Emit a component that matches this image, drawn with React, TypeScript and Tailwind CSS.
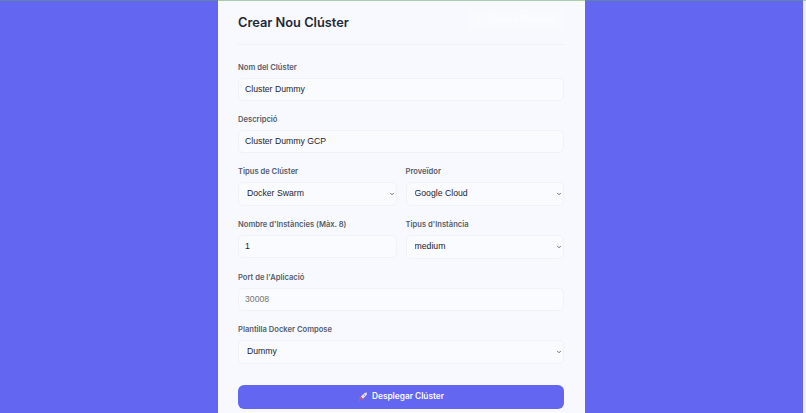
import type { ReactNode } from 'react';
import { ChevronDown } from 'lucide-react';

function Label({ children }: { children: ReactNode }) {
  return <label className="block h-[11px] text-[7.6px] leading-[11px] font-semibold text-[#555d6b]">{children}</label>;
}

function TextField({ label, value, placeholder }: { label: string; value?: string; placeholder?: string }) {
  return (
    <div className="flex flex-col gap-[5px]">
      <Label>{label}</Label>
      <input
        readOnly
        defaultValue={value}
        placeholder={placeholder}
        className="h-[22.5px] w-full rounded-[5px] border border-[#f0f2f7] bg-[#fafbfe] px-[6px] font-['Liberation_Sans',sans-serif] text-[8.7px] text-[#1b2330] outline-none placeholder:text-[#757575]"
      />
    </div>
  );
}

function SelectField({ label, value }: { label: string; value: string }) {
  return (
    <div className="flex flex-col gap-[5px]">
      <Label>{label}</Label>
      <div className="relative">
        <select
          defaultValue={value}
          className="block h-[23.5px] w-full appearance-none rounded-[5px] border border-[#f0f2f7] bg-[#fafbfe] pl-[8px] font-['Liberation_Sans',sans-serif] text-[8.7px] text-[#1b2330] outline-none"
        >
          <option>{value}</option>
        </select>
        <ChevronDown className="absolute top-[9px] right-[2px] h-[6px] w-[6px] text-[#374151]" strokeWidth={3} />
      </div>
    </div>
  );
}

export default function App() {
  return (
    <div className="relative flex h-[413px] w-full overflow-hidden bg-[#6366f1] font-['Inter',sans-serif]">
      {/* top loading line */}
      <div className="absolute inset-x-0 top-0 h-px bg-[#5fa05f]/50" />

      <div className="flex flex-1 justify-center">
        <div className="h-full w-[367px] bg-[#f8f9fe] pt-[14px] pr-[21px] pl-[20px]">
          {/* Header */}
          <div className="flex h-[31px] items-start justify-between border-b border-[#eff1f5]">
            <h1 className="text-[12.8px] leading-[18px] font-semibold text-[#1f2937]">Crear Nou Clúster</h1>
            <a className="-mt-[4px] rounded-[4px] bg-white/10 px-[7px] py-[4px] text-[8.4px] leading-[11px] font-medium text-white/70">← Tornar a Plantilles</a>
          </div>

          {/* Form */}
          <div className="mt-[17px] flex flex-col gap-[13.5px]">
            <TextField label="Nom del Clúster" value="Cluster Dummy" />
            <TextField label="Descripció" value="Cluster Dummy GCP" />
            <div className="grid grid-cols-2 gap-x-[9px]">
              <SelectField label="Tipus de Clúster" value="Docker Swarm" />
              <SelectField label="Proveïdor" value="Google Cloud" />
            </div>
            <div className="grid grid-cols-2 gap-x-[9px]">
              <TextField label="Nombre d'Instàncies (Màx. 8)" value="1" />
              <SelectField label="Tipus d'Instància" value="medium" />
            </div>
            <TextField label="Port de l'Aplicació" placeholder="30008" />
            <SelectField label="Plantilla Docker Compose" value="Dummy" />
          </div>

          <button className="mt-[21px] flex h-[24px] w-full items-center justify-center gap-[4px] rounded-[6px] bg-[#6366f1] text-[8.3px] font-semibold text-[#fafaff]">
            <svg viewBox="0 0 12 12" className="h-[10px] w-[10px]">
              <path d="M3.500 5.500 7.500 1.500c1.200-.8 2.400-1 3.100-.6.400.7.200 1.900-.6 3.100L6 8z" fill="#f0d8e0" />
              <path d="M3.500 5.500 1.700 5.800.8 7.300 2.800 7.100zM6 8 5.700 9.800 4.200 10.700 4.400 8.700z" fill="#e0566a" />
              <path d="M3.800 7.200 1.700 10.600 1 10.200 3.200 6.700z" fill="#e8705a" />
              <circle cx="7.700" cy="3.900" r=".9" fill="#7aa8e8" />
            </svg>
            Desplegar Clúster
          </button>
        </div>
      </div>

      {/* scrollbar */}
      <div className="w-[3px] bg-[#eef0fb]" />
    </div>
  );
}
